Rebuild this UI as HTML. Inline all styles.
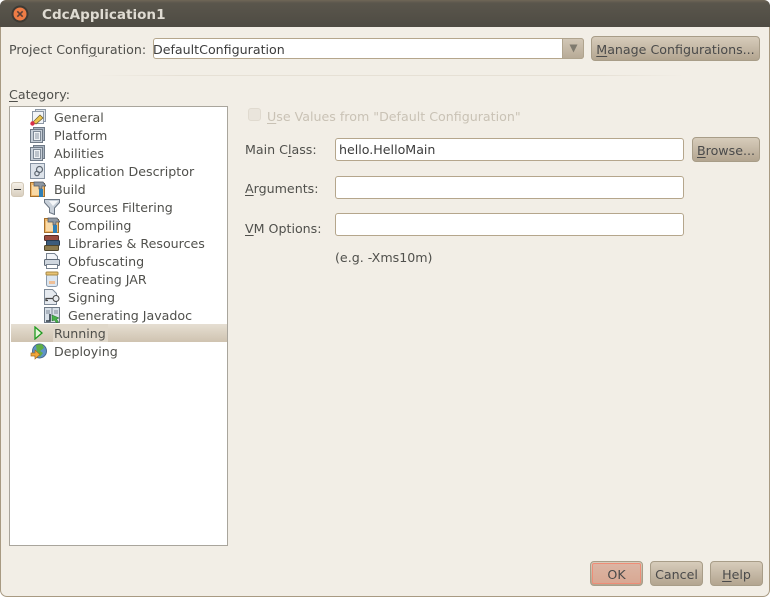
<!DOCTYPE html>
<html><head><meta charset="utf-8">
<style>
html,body{margin:0;padding:0}
body{width:770px;height:597px;position:relative;overflow:hidden;background:#fff;font-family:"DejaVu Sans",sans-serif;font-size:12.64px;color:#50504c}
.win{position:absolute;left:0;top:0;width:770px;height:597px;box-sizing:border-box;background:#f2eee6;border:1px solid #a89a82;border-top:0;border-radius:7px}
.tb{position:absolute;left:0;top:0;width:770px;height:27px;border-radius:6px 6px 0 0;background:linear-gradient(#6f6757 0,#5a564c 3px,#4e4b43 100%)}
.t{position:absolute;white-space:nowrap;line-height:16px}
u{text-decoration:underline;text-underline-offset:2px}
.title{left:42px;top:6px;font-weight:bold;color:#dfdbd2;font-size:13.55px}
.inp{position:absolute;background:#fff;border:1px solid #b5a68c;border-radius:3px;box-sizing:border-box}
.btn{position:absolute;box-sizing:border-box;border:1px solid #a89d88;border-radius:4px;background:linear-gradient(#d7ccbb,#b3a590);text-align:center;color:#4a4a4a;line-height:26px}
.list{position:absolute;left:9px;top:106px;width:219px;height:440px;box-sizing:border-box;background:#fff;border:1px solid #a9a59c}
.sel{position:absolute;left:11px;top:324px;width:216px;height:18px;background:linear-gradient(#e6dfd3,#cfc3b0)}
.sel2{position:absolute;left:53px;top:324px;width:55px;height:18px;background:#e0d8ca}
svg{position:absolute}
</style></head><body>
<div class="win"></div>
<div class="tb"></div>
<svg style="left:11px;top:5px" width="18" height="18" viewBox="0 0 18 18"><circle cx="9" cy="9" r="8.500" fill="#3d3a34"/><circle cx="9" cy="9" r="6.500" fill="#ee7c45"/><path d="M6.300 6.300l5.400 5.400M11.700 6.300l-5.400 5.400" stroke="#5c4037" stroke-width="1.600"/></svg>
<div class="t title" style="top:7px">CdcApplication1</div>

<div class="t" style="left:9px;top:42px">Project Confi<u>g</u>uration:</div>
<div class="inp" style="left:153px;top:38px;width:431px;height:21px"></div>
<div class="t" style="left:153px;top:42px;color:#3c3c3c">DefaultConfiguration</div>
<div style="position:absolute;left:562px;top:38px;width:22px;height:21px;box-sizing:border-box;background:linear-gradient(#d2c7b6,#b8ab97);border:1px solid #b0a48e;border-radius:0 3px 3px 0"></div>
<svg style="left:569px;top:44px" width="9" height="9"><path d="M0.500 0.500H8.500L4.500 8.500Z" fill="#7f7a6e"/></svg>
<div class="btn" style="left:591px;top:36px;width:169px;height:25px"><u>M</u>anage Configurations...</div>
<div style="position:absolute;left:95px;top:75px;width:590px;height:1px;background:linear-gradient(90deg,#f2eee6,#e6e0d5 15%,#e6e0d5 85%,#f2eee6)"></div>
<div class="t" style="left:9px;top:87px"><u>C</u>ategory:</div>

<div class="list"></div>
<div class="sel"></div><div class="sel2"></div>
<div class="t" style="left:54px;top:110px">General</div>
<div class="t" style="left:54px;top:128px">Platform</div>
<div class="t" style="left:54px;top:146px">Abilities</div>
<div class="t" style="left:54px;top:164px">Application Descriptor</div>
<div class="t" style="left:54px;top:182px">Build</div>
<div class="t" style="left:68px;top:200px">Sources Filtering</div>
<div class="t" style="left:68px;top:218px">Compiling</div>
<div class="t" style="left:68px;top:236px">Libraries &amp; Resources</div>
<div class="t" style="left:68px;top:254px">Obfuscating</div>
<div class="t" style="left:68px;top:272px">Creating JAR</div>
<div class="t" style="left:68px;top:290px">Signing</div>
<div class="t" style="left:68px;top:308px">Generating Javadoc</div>
<div class="t" style="left:54px;top:326px">Running</div>
<div class="t" style="left:54px;top:344px">Deploying</div>

<!-- General -->
<svg style="left:30px;top:109px" width="17" height="17"><rect x="5.500" y="0.500" width="10" height="12" fill="#dfe4ea" stroke="#8d98a6"/><rect x="2.500" y="2.500" width="11" height="12" fill="#f2f4f7" stroke="#8d98a6"/><path d="M3 13L10 6l3 3-7 6z" fill="#edc64f" stroke="#6b5a2a" stroke-width=".7"/><circle cx="2.500" cy="14.500" r="2.200" fill="#d8304a"/></svg>
<!-- Platform / Abilities -->
<svg style="left:30px;top:127px" width="16" height="16"><path d="M3.500 0.500h11v12" fill="#aab5c1" stroke="#6f7a87"/><rect x="3.500" y="0.500" width="11" height="13" fill="#aab5c1" stroke="#6f7a87"/><rect x="0.500" y="2.500" width="12" height="13" fill="#c6ced7" stroke="#6f7a87"/><rect x="3.500" y="4.500" width="7" height="9" fill="#eef1f4" stroke="#7e8996"/><path d="M5 7h4M5 9h4M5 11h4" stroke="#8c97a3"/></svg>
<svg style="left:30px;top:145px" width="16" height="16"><rect x="3.500" y="0.500" width="11" height="13" fill="#aab5c1" stroke="#6f7a87"/><rect x="0.500" y="2.500" width="12" height="13" fill="#c6ced7" stroke="#6f7a87"/><rect x="3.500" y="4.500" width="7" height="9" fill="#eef1f4" stroke="#7e8996"/><path d="M5 7h4M5 9h4M5 11h4" stroke="#8c97a3"/></svg>
<!-- Descriptor -->
<svg style="left:30px;top:163px" width="16" height="16"><rect x="0.500" y="0.500" width="14" height="15" fill="#dde3ea" stroke="#8793a2"/><circle cx="9.500" cy="6.500" r="3" fill="none" stroke="#5d6670" stroke-width="1.200"/><circle cx="7" cy="10.500" r="2.200" fill="none" stroke="#5d6670" stroke-width="1.200"/></svg>
<!-- Expander -->
<div style="position:absolute;left:11px;top:182px;width:13px;height:15px;box-sizing:border-box;background:linear-gradient(#f4efe6,#d9cfbf);border:1px solid #d2c8b7;border-radius:3px"></div>
<div style="position:absolute;left:14px;top:189px;width:7px;height:1px;background:#333"></div>
<!-- Build -->
<svg style="left:30px;top:181px" width="16" height="16"><path d="M0.500 1.500h5l1 1h8v13h-14z" fill="#f0b76a" stroke="#a4702d"/><rect x="2" y="4" width="11" height="10" fill="#f8d9a6"/><path d="M4 1h9l3 4h-4v3H9V5H4z" fill="#8f98a2" stroke="#4d545c" stroke-width=".7"/><rect x="9" y="8" width="4" height="8" fill="#2f7fb5"/></svg>
<!-- Filter -->
<svg style="left:44px;top:199px" width="16" height="16"><path d="M0.500 0.500h15v3L10.500 9v6.500l-5-2V9L0.500 3.500z" fill="#c9d1da" stroke="#6c7784"/><path d="M5 2h9L9 7z" fill="#f4f6f8"/></svg>
<!-- Compiling -->
<svg style="left:44px;top:217px" width="16" height="16"><path d="M0.500 1.500h5l1 1h8v13h-14z" fill="#f0b76a" stroke="#a4702d"/><rect x="2" y="4" width="11" height="10" fill="#f8d9a6"/><path d="M4 1h9l3 4h-4v3H9V5H4z" fill="#8f98a2" stroke="#4d545c" stroke-width=".7"/><rect x="9" y="8" width="4" height="8" fill="#2f7fb5"/></svg>
<!-- Libraries -->
<svg style="left:44px;top:235px" width="16" height="16"><rect x="0.500" y="0.500" width="14" height="5" rx="1" fill="#9a4b3f" stroke="#5b2e28"/><rect x="2.500" y="5.500" width="13" height="5" rx="1" fill="#3c5c7c" stroke="#263a4f"/><rect x="0.500" y="10.500" width="14" height="5" rx="1" fill="#8c7a4c" stroke="#4f452b"/></svg>
<!-- Obfuscating -->
<svg style="left:44px;top:253px" width="16" height="16"><path d="M2.500 0.500h8l3 3v4h-11z" fill="#f2f4f7" stroke="#77828f"/><rect x="0.500" y="6.500" width="15" height="6" rx="1" fill="#d0d7df" stroke="#5f6a77"/><rect x="2.500" y="11.500" width="11" height="4" fill="#fff" stroke="#77828f"/></svg>
<!-- JAR -->
<svg style="left:44px;top:271px" width="16" height="16"><rect x="2.500" y="3.500" width="11" height="12" rx="2" fill="#dce6f0" stroke="#8a9bae"/><rect x="2" y="1" width="12" height="3" rx="1" fill="#e8c373" stroke="#a88a45"/><rect x="5" y="10" width="6" height="3" fill="#eebf97"/></svg>
<!-- Signing -->
<svg style="left:44px;top:289px" width="16" height="16"><path d="M0.500 0.500h8l4 4v11h-12z" fill="#e6eaef" stroke="#7f8b99"/><circle cx="12" cy="9.500" r="3" fill="#e8ebee" stroke="#444"/><path d="M9 9.500H2v2h2" fill="none" stroke="#444" stroke-width="1.300"/></svg>
<!-- Javadoc -->
<svg style="left:44px;top:307px" width="16" height="16"><rect x="0.500" y="0.500" width="15" height="15" fill="#d8e0e8" stroke="#6f7a87"/><path d="M8 1v8M2 4h4M2 6h4M10 4h4M10 6h4" stroke="#7e8996"/><path d="M6 7v7H2" fill="none" stroke="#2d3a46" stroke-width="1.600"/><path d="M8 8l7 3-2.500 1 2 3-2 1-2-3L8 14z" fill="#46b04a" stroke="#23702a" stroke-width=".5"/></svg>
<!-- Running -->
<svg style="left:34px;top:326px" width="10" height="14"><path d="M1 1l7 6-7 6z" fill="#e4f5d8" stroke="#1f9a1f" stroke-width="1.300"/></svg>
<!-- Deploying -->
<svg style="left:30px;top:343px" width="17" height="17"><circle cx="9.500" cy="8" r="7" fill="#5f93c9" stroke="#47698c"/><path d="M6 2l6-1 2 4-4 3 3 2-3 4-3-4z" fill="#5fae45"/><path d="M1 10h4V7l5 4.500L5 16v-3H1z" fill="#f1a73a" stroke="#a86a1c" stroke-width=".7"/></svg>

<!-- Right -->
<div style="position:absolute;left:248px;top:108px;width:13px;height:13px;box-sizing:border-box;background:#eae5dc;border:1px solid #e0dacf;border-radius:3px"></div>
<div class="t" style="left:267px;top:109px;color:#c9c2b5"><u>U</u>se Values from "Default Configuration"</div>
<div class="t" style="left:245px;top:142px">Main C<u>l</u>ass:</div>
<div class="inp" style="left:335px;top:138px;width:349px;height:23px"></div>
<div class="t" style="left:339px;top:142px;color:#3c3c3c">hello.HelloMain</div>
<div class="btn" style="left:692px;top:137px;width:68px;height:25px"><u>B</u>rowse...</div>
<div class="t" style="left:245px;top:181px"><u>A</u>rguments:</div>
<div class="inp" style="left:335px;top:176px;width:349px;height:23px"></div>
<div class="t" style="left:245px;top:221px"><u>V</u>M Options:</div>
<div class="inp" style="left:335px;top:213px;width:349px;height:23px"></div>
<div class="t" style="left:335px;top:250px">(e.g. -Xms10m)</div>

<div class="btn" style="left:590px;top:561px;width:53px;height:25px"></div>
<div class="btn" style="left:592px;top:563px;width:49px;height:21px;border-color:#ef8d77;background:linear-gradient(#dcb5a3,#d8a893);line-height:22px;border-radius:2px">OK</div>
<div class="btn" style="left:650px;top:561px;width:53px;height:25px">Cancel</div>
<div class="btn" style="left:710px;top:561px;width:53px;height:25px"><u>H</u>elp</div>
</body></html>
